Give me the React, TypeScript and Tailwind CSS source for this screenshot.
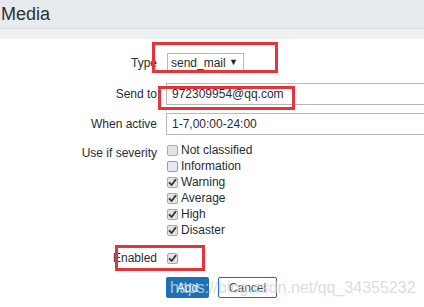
import React from "react";

function Box({ checked, focus }: { checked?: boolean; focus?: boolean }) {
  return (
    <span
      className={`flex h-[11px] w-[11px] shrink-0 items-center justify-center rounded-[2px] border ${
        focus ? "border-[#7d9fd6] bg-[#e4eaf4]" : "border-[#a9a9a9] bg-[#e3e3e3]"
      }`}
    >
      {checked && (
        <svg width="9" height="9" viewBox="0 0 9 9">
          <path d="M1.5 4.8 L3.6 7 L7.6 1.8" fill="none" stroke="#333" strokeWidth="1.8" strokeLinecap="round" strokeLinejoin="round" />
        </svg>
      )}
    </span>
  );
}

const severities: { name: string; checked: boolean; focus?: boolean }[] = [
  { name: "Not classified", checked: false },
  { name: "Information", checked: false, focus: true },
  { name: "Warning", checked: true },
  { name: "Average", checked: true },
  { name: "High", checked: true },
  { name: "Disaster", checked: true },
];

export default function App() {
  return (
    <div className="relative h-[307px] w-[424px] overflow-hidden bg-white font-['Liberation_Sans',Arial,sans-serif] text-[12px] text-[#1f2c33]">
      <div className="h-[29px] border-b border-[#d9dde1] bg-[#e8ebee] pl-[1px] text-[18px] leading-[28px] text-[#2b3238]">
        Media
      </div>
      <div className="h-[10px] bg-[#eef0f2]" />

      <div className="mt-[14px] flex flex-col">
        <div className="flex h-[19px] items-center">
          <div className="w-[157px] shrink-0 text-right">Type</div>
          <div className="ml-[10px] flex h-[19px] w-[77px] shrink-0 items-center justify-between border border-[#b8b8b8] bg-white pl-[3px] pr-[5px] text-[12px]">
            <span>send_mail</span>
            <span className="text-[9px] text-[#222]">▼</span>
          </div>
        </div>

        <div className="mt-[11px] flex h-[22px] items-center">
          <div className="w-[157px] shrink-0 text-right">Send to</div>
          <div className="ml-[9px] flex h-[22px] w-[300px] shrink-0 items-center border border-[#b8b8b8] pl-[5px]">
            972309954@qq.com
          </div>
        </div>

        <div className="mt-[8px] flex h-[22px] items-center">
          <div className="w-[157px] shrink-0 text-right">When active</div>
          <div className="ml-[9px] flex h-[22px] w-[300px] shrink-0 items-center border border-[#b8b8b8] pl-[5px]">
            1-7,00:00-24:00
          </div>
        </div>

        <div className="mt-[7px] flex">
          <div className="w-[157px] shrink-0 pt-[3px] text-right leading-[16px]">Use if severity</div>
          <div className="ml-[10px] flex flex-col">
            {severities.map((s) => (
              <div key={s.name} className="flex h-[16px] items-center gap-[3px] text-[12px]">
                <Box checked={s.checked} focus={s.focus} />
                <span>{s.name}</span>
              </div>
            ))}
          </div>
        </div>

        <div className="mt-[12px] flex h-[16px] items-center">
          <div className="w-[157px] shrink-0 text-right">Enabled</div>
          <div className="ml-[10px]">
            <Box checked />
          </div>
        </div>

        <div className="mt-[11px] flex h-[21px] items-center">
          <div className="w-[157px] shrink-0" />
          <div className="ml-[9px] flex gap-[9px]">
            <div className="flex h-[21px] w-[43px] items-center justify-center rounded-[2px] bg-[#1d6fb6] text-[12px] text-white">
              Add
            </div>
            <div className="flex h-[21px] w-[59px] items-center justify-center rounded-[2px] border border-[#1d6fb6] bg-white text-[12px] text-[#34495e]">
              Cancel
            </div>
          </div>
        </div>
      </div>

      <div className="pointer-events-none absolute left-[170px] top-[279px] whitespace-nowrap text-[16px] leading-[18px] text-[#d6d6d6] opacity-80">
        https://blog.csdn.net/qq_34355232
      </div>

      <div className="pointer-events-none absolute left-[152px] top-[42px] h-[31px] w-[126px] border-[3px] border-[#e5343a]" />
      <div className="pointer-events-none absolute left-[158px] top-[86px] h-[24px] w-[137px] border-[3px] border-[#e5343a]" />
      <div className="pointer-events-none absolute left-[115px] top-[245px] h-[26px] w-[90px] border-[3px] border-[#e5343a]" />
    </div>
  );
}
